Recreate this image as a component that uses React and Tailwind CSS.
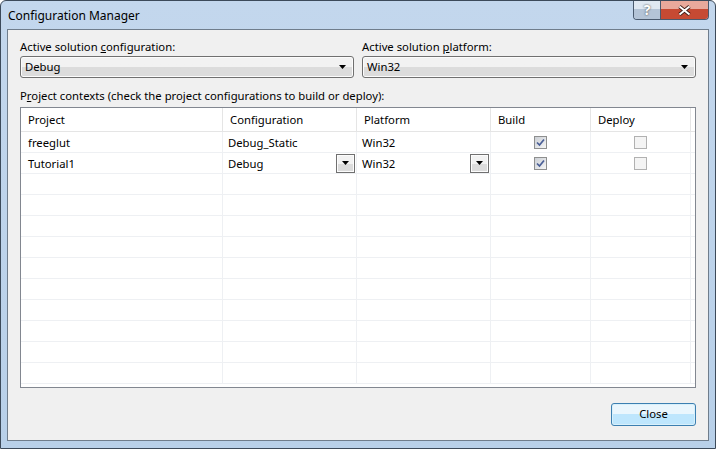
import React from 'react';

const font = "font-['Segoe_UI','Noto_Sans',sans-serif]";

const Arrow = () => (
    <svg width="7" height="4" viewBox="0 0 7 4">
        <path d="M0 0h7L3.5 4z" fill="#000" />
    </svg>
);

const Combo = ({ value }) => (
    <div className="h-[22px] flex items-center justify-between rounded-[3px] border border-[#707070] bg-gradient-to-b from-[#f2f2f2] from-50% to-[#dcdcdc] to-50% pl-[4px] pr-[7px] shadow-[inset_0_0_0_1px_#fcfcfc]">
        <span>{value}</span>
        <Arrow />
    </div>
);

const CellButton = () => (
    <div className="w-[19px] h-[19px] flex items-center justify-center border border-[#707070] bg-gradient-to-b from-[#f2f2f2] from-50% to-[#dcdcdc] to-50% shadow-[inset_0_0_0_1px_#fcfcfc]">
        <Arrow />
    </div>
);

const Check = ({ checked }) => (
    checked ? (
        <div className="w-[13px] h-[13px] border border-[#8e8f8f] bg-gradient-to-br from-[#cbcfd5] to-[#f6f6f6] flex items-center justify-center">
            <svg width="9" height="9" viewBox="0 0 9 9">
                <path d="M1 4.5l2.5 2.5L8 1.5" stroke="#4a5f97" strokeWidth="1.7" fill="none" />
            </svg>
        </div>
    ) : (
        <div className="w-[13px] h-[13px] border border-[#b1b1b1] bg-[#f4f4f4]" />
    )
);

const cols = 'grid grid-cols-[202px_134px_134px_100px_100px_1fr]';

const rows = [
    { project: 'freeglut', config: 'Debug_Static', platform: 'Win32', build: true, combo: false },
    { project: 'Tutorial1', config: 'Debug', platform: 'Win32', build: true, combo: true },
];

const App = () => {
    const empty = Array.from({ length: 10 });

    return (
        <div className={`${font} text-[11.3px] text-black w-[716px] h-[449px] flex flex-col rounded-t-[6px] border border-[#3c4a5a] bg-gradient-to-b from-[#c3d7ed] to-[#b8d0e9]`}>
            {/* Title bar */}
            <div className="h-[28px] flex items-start justify-between pl-[7px] pr-[6px] shrink-0">
                <span className="mt-[6px] text-[12px]">Configuration Manager</span>
                <div className="flex h-[19px] rounded-b-[4px] border border-t-0 border-[#4a5a6e] overflow-hidden">
                    <div className="w-[27px] flex items-center justify-center bg-gradient-to-b from-[#dfe8f2] from-45% to-[#b4c4d7] to-45% border-r border-[#4a5a6e] text-white font-bold text-[14px] leading-none [text-shadow:0_0_2px_#333]">?</div>
                    <div className="w-[47px] flex items-center justify-center bg-gradient-to-b from-[#e9a99b] from-45% to-[#c64a33] to-45%">
                        <svg width="13" height="11" viewBox="0 0 13 11">
                            <path d="M1.5 1.5l10 8M11.5 1.5l-10 8" stroke="#3a1a14" strokeWidth="3.6" />
                            <path d="M1.5 1.5l10 8M11.5 1.5l-10 8" stroke="#fff" strokeWidth="2" />
                        </svg>
                    </div>
                </div>
            </div>

            {/* Client area */}
            <div className="flex-1 mx-[6px] mb-[7px] border border-[#6f7d8c] bg-[#f0f0f0] flex flex-col px-[12px] pt-[9px]">
                <div className="grid grid-cols-2 gap-x-[8px]">
                    <div className="flex flex-col gap-[1px]">
                        <span className="leading-[16px]">Active solution <u>c</u>onfiguration:</span>
                        <Combo value="Debug" />
                    </div>
                    <div className="flex flex-col gap-[1px]">
                        <span className="leading-[16px]">Active solution <u>p</u>latform:</span>
                        <Combo value="Win32" />
                    </div>
                </div>

                <span className="leading-[16px] mt-[10px]">P<u>r</u>oject contexts (check the project configurations to build or deploy):</span>

                {/* Project grid */}
                <div className="mt-[3px] h-[281px] border border-[#828790] bg-white overflow-hidden">
                    <div className={`${cols} h-[24px] border-b border-[#e5e5e5]`}>
                        {['Project', 'Configuration', 'Platform', 'Build', 'Deploy', ''].map((h, i) => (
                            <div key={i} className="flex items-center pt-[2px] pl-[7px] border-r border-[#e5e5e5]">{h}</div>
                        ))}
                    </div>
                    {rows.map((r) => (
                        <div key={r.project} className={`${cols} h-[21px] border-b border-[#eef0f3]`}>
                            <div className="flex items-center pt-[2px] pl-[7px] border-r border-[#eef0f3]">{r.project}</div>
                            <div className="flex items-center justify-between pl-[5px] pr-px border-r border-[#eef0f3]">
                                <span className="pt-[2px]">{r.config}</span>
                                {r.combo && <CellButton />}
                            </div>
                            <div className="flex items-center justify-between pl-[5px] pr-px border-r border-[#eef0f3]">
                                <span className="pt-[2px]">{r.platform}</span>
                                {r.combo && <CellButton />}
                            </div>
                            <div className="flex items-center justify-center border-r border-[#eef0f3]"><Check checked={r.build} /></div>
                            <div className="flex items-center justify-center border-r border-[#eef0f3]"><Check checked={false} /></div>
                            <div />
                        </div>
                    ))}
                    {empty.map((_, i) => (
                        <div key={i} className={`${cols} h-[21px] border-b border-[#eef0f3]`}>
                            <div className="border-r border-[#eef0f3]" />
                            <div className="border-r border-[#eef0f3]" />
                            <div className="border-r border-[#eef0f3]" />
                            <div className="border-r border-[#eef0f3]" />
                            <div className="border-r border-[#eef0f3]" />
                            <div />
                        </div>
                    ))}
                </div>

                <div className="flex justify-end mt-[15px]">
                    <button className="w-[85px] h-[23px] rounded-[3px] border border-[#3c7fb1] bg-gradient-to-b from-[#eaf6fd] from-50% to-[#bee6fd] to-50% shadow-[inset_0_0_0_1px_#d8f0fb]">
                        Close
                    </button>
                </div>
            </div>
        </div>
    );
};

export default App;
